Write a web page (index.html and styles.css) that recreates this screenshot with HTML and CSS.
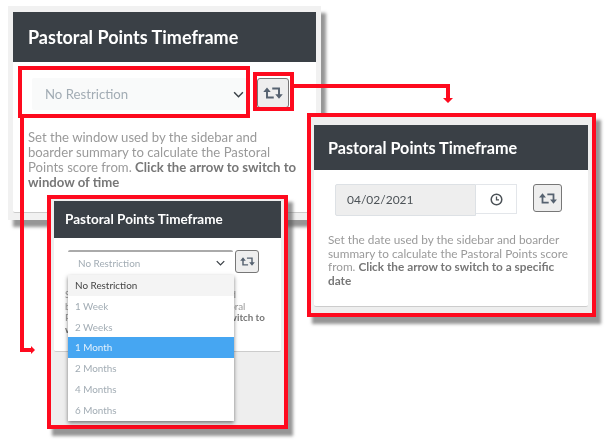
FILE: index.html
```html
<!DOCTYPE html>
<html>
    <head>
        <meta charset="utf-8">
        <title>Pastoral Points Timeframe</title>
        <link rel="stylesheet" href="styles.css">
    </head>
    <body>
    <svg width="0" height="0" class="defs">
        <symbol id="retweet" viewBox="0 0 26 16">
            <path d="M5 5v9h9M21 11V2h-9" fill="none" stroke="currentColor" stroke-width="2.600"/>
            <path d="M0 6.500L5 .5l5 6zM16 9.500h10l-5 6z" fill="currentColor"/>
        </symbol>
        <symbol id="chevron" viewBox="0 0 12 8">
            <path d="M1 1.500l5 5 5-5" fill="none" stroke="currentColor" stroke-width="1.700"/>
        </symbol>
    </svg>

    <!-- window of time -->
    <div class="shot shot-window">
        <div class="card">
            <h2 class="card-title">Pastoral Points Timeframe</h2>
            <div class="card-body">
                <div class="controls">
                    <div class="select">
                        <span>No Restriction</span>
                        <svg class="chevron"><use href="#chevron"/></svg>
                    </div>
                    <button class="switch"><svg><use href="#retweet"/></svg></button>
                </div>
                <p class="help">Set the window used by the sidebar and boarder summary to calculate the Pastoral Points score from. <b>Click the arrow to switch to window of time</b></p>
            </div>
        </div>
    </div>

    <!-- specific date -->
    <div class="shot shot-date">
        <div class="card">
            <h2 class="card-title">Pastoral Points Timeframe</h2>
            <div class="card-body">
                <div class="controls">
                    <div class="date">04/02/2021</div>
                    <div class="date-addon">
                        <svg width="13" height="13" viewBox="0 0 13 13">
                            <circle cx="6.500" cy="6.500" r="5.300" fill="none" stroke="currentColor" stroke-width="1.500"/>
                            <path d="M6.500 3.500v3.300h2.500" fill="none" stroke="currentColor" stroke-width="1.300"/>
                        </svg>
                    </div>
                    <button class="switch"><svg><use href="#retweet"/></svg></button>
                </div>
                <p class="help">Set the date used by the sidebar and boarder summary to calculate the Pastoral Points score from. <b>Click the arrow to switch to a specific date</b></p>
            </div>
        </div>
    </div>

    <!-- dropdown open -->
    <div class="shot shot-open">
        <div class="card">
            <h2 class="card-title">Pastoral Points Timeframe</h2>
            <div class="card-body">
                <div class="controls">
                    <div class="select">
                        <span>No Restriction</span>
                        <svg class="chevron"><use href="#chevron"/></svg>
                    </div>
                    <button class="switch"><svg><use href="#retweet"/></svg></button>
                </div>
                <p class="help">Set the window used by the sidebar and boarder summary to calculate the Pastoral Points score from. <b>Click the arrow to switch to window of time</b></p>
            </div>
        </div>
        <ul class="menu">
            <li class="first">No Restriction</li>
            <li>1 Week</li>
            <li>2 Weeks</li>
            <li class="active">1 Month</li>
            <li>2 Months</li>
            <li>4 Months</li>
            <li>6 Months</li>
        </ul>
    </div>

    <!-- annotations -->
    <div class="mark mark-select"></div>
    <div class="mark mark-switch"></div>
    <svg class="arrows" width="610" height="447">
        <path d="M294 86H448V100M22 118V350H31" fill="none" stroke="#fe0a1e" stroke-width="4"/>
        <path d="M443 98h10l-5 5zM31 346l4 4-4 4z" fill="#fe0a1e"/>
    </svg>
    </body>
</html>
```

FILE: styles.css
```css
body, html {
    height: 100%;
    margin: 0;
    padding: 0;
    background: #fff;
    font-family: Lato, "Open Sans", sans-serif;
    overflow: hidden;
}
body {
    position: relative;
    filter: blur(0.35px);
}
.defs {
    position: absolute;
}
.shot {
    position: absolute;
    box-sizing: border-box;
    background: #eee;
    box-shadow: 5px 7px 3px rgba(80, 80, 80, .6);
}
.shot-window {
    left: 8px;
    top: 6px;
    width: 313px;
    height: 214px;
    padding: 6px 5px 7px 5px;
    background: #f1f1f1;
}
.shot-date {
    left: 307px;
    top: 113px;
    width: 289px;
    height: 204px;
    padding: 8px 4px 6px 3px;
    border: solid 4px #fe0a1e;
}
.shot-open {
    left: 47px;
    top: 195px;
    width: 241px;
    height: 234px;
    padding: 2px 3px;
    border: solid 4px #fe0a1e;
}
.card {
    height: 100%;
    box-sizing: border-box;
    background: #fff;
    border-bottom: solid 1px #ccc;
    border-radius: 2px;
}
.shot-open .card {
    height: 151px;
}
.card-title {
    margin: 0;
    height: 50px;
    padding-left: 15px;
    background: #3a4046;
    color: #fff;
    font-size: 18px;
    font-weight: 700;
    line-height: 50px;
}
.shot-date .card-title {
    height: 45px;
    padding-left: 14px;
    font-size: 16.200px;
    line-height: 45px;
}
.shot-open .card-title {
    height: 37px;
    padding-left: 11px;
    font-size: 13.500px;
    line-height: 37px;
}
.card-body {
    padding: 16px 15px 0;
}
.shot-date .card-body {
    padding: 14px 14px 0;
}
.shot-open .card-body {
    padding: 12px 11px 0;
}
.controls {
    display: flex;
    align-items: flex-start;
    height: 32px;
    margin-left: 4px;
}
.shot-date .controls {
    margin-left: 7px;
}
.shot-open .controls {
    height: 25px;
    margin-left: 3px;
}
.select {
    display: flex;
    align-items: center;
    justify-content: space-between;
    width: 215px;
    height: 32px;
    box-sizing: border-box;
    padding: 0 3px 0 13px;
    background: #f9fafa;
    border-radius: 2px;
    color: #a2acb4;
    font-size: 13.200px;
}
.shot-open .select {
    width: 165px;
    height: 23px;
    padding: 0 8px 0 10px;
    background: #fff;
    border-top: solid 2px #aaa;
    font-size: 9.900px;
}
.chevron {
    width: 11px;
    height: 7px;
    color: #3a4046;
}
.shot-open .chevron {
    width: 9px;
    height: 6px;
}
.switch {
    display: flex;
    align-items: center;
    justify-content: center;
    width: 32px;
    height: 30px;
    margin-left: 10px;
    padding: 0;
    background: #eee;
    border: solid 1px #777;
    border-radius: 3px;
    color: #566270;
}
.switch svg {
    width: 20px;
    height: 12px;
}
.shot-date .switch {
    width: 29px;
    height: 28px;
    margin-left: 16px;
}
.shot-date .switch svg {
    width: 18px;
    height: 11px;
}
.shot-open .switch {
    width: 24px;
    height: 23px;
    margin-left: 2px;
}
.shot-open .switch svg {
    width: 15px;
    height: 9px;
}
.date {
    width: 141px;
    height: 32px;
    box-sizing: border-box;
    padding-left: 11px;
    background: #eee;
    border: solid 1px #dde1e5;
    border-radius: 2px 0 0 2px;
    color: #4c5257;
    font-size: 12px;
    line-height: 30px;
}
.date-addon {
    display: flex;
    align-items: center;
    justify-content: center;
    width: 41px;
    height: 30px;
    box-sizing: border-box;
    background: #fff;
    border: solid 1px #e3e6ea;
    border-left: none;
    color: #4c5257;
}
.help {
    margin: 20px 0 0;
    color: #9a9a9a;
    font-size: 13.150px;
    line-height: 15px;
}
.help b {
    color: #777;
}
.shot-date .help {
    margin-top: 17px;
    font-size: 11.800px;
    line-height: 13.700px;
}
.shot-open .help {
    margin-top: 14px;
    font-size: 9.800px;
    line-height: 11.500px;
}
.menu {
    position: absolute;
    left: 17px;
    top: 76px;
    width: 166px;
    margin: 0;
    padding: 0;
    list-style: none;
    background: #fff;
    box-shadow: 0 2px 4px rgba(0, 0, 0, .5);
    color: #a2acb4;
    font-size: 9.900px;
    line-height: 20.800px;
}
.menu li {
    padding-left: 7px;
}
.menu .first {
    background: #f4f4f4;
    color: #444;
}
.menu .active {
    background: #46a6f2;
    color: #e3f1fc;
}
.mark {
    position: absolute;
    box-sizing: border-box;
    border: solid 4px #fe0a1e;
}
.mark-select {
    left: 18px;
    top: 66px;
    width: 232px;
    height: 52px;
}
.mark-switch {
    left: 253px;
    top: 72px;
    width: 41px;
    height: 39px;
}
.arrows {
    position: absolute;
    left: 0;
    top: 0;
}
```
